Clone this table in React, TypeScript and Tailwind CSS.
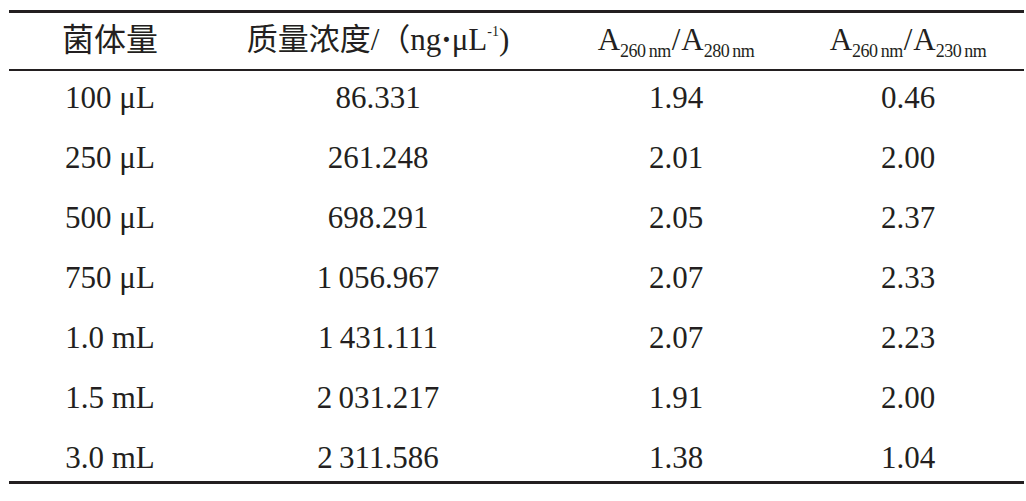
const rows = [
  ['100 μL', '86.331', '1.94', '0.46'],
  ['250 μL', '261.248', '2.01', '2.00'],
  ['500 μL', '698.291', '2.05', '2.37'],
  ['750 μL', '1\u2009056.967', '2.07', '2.33'],
  ['1.0 mL', '1\u2009431.111', '2.07', '2.23'],
  ['1.5 mL', '2\u2009031.217', '1.91', '2.00'],
  ['3.0 mL', '2\u2009311.586', '1.38', '1.04'],
]

function Ratio({ a, b }: { a: string; b: string }) {
  return (
    <span className="whitespace-nowrap">
      A<sub className="text-[18px] tracking-[-0.5px] align-[-2px]">{a}&#8201;nm</sub>
      <span className="mx-[1px]">/</span>
      A<sub className="text-[18px] tracking-[-0.5px] align-[-2px]">{b}&#8201;nm</sub>
    </span>
  )
}

export default function App() {
  return (
    <div className="w-[1026px] h-[501px] bg-white pt-[10px] pl-[9px] pr-[2px] text-[#231f20] font-['Liberation_Serif','Noto_Sans_CJK_SC',serif]">
      <div className="border-t-[3px] border-b-[3px] border-[#231f20]">
        {/* Header */}
        <div className="grid grid-cols-[202px_334px_262px_217px] h-[58px] items-center pb-[3px] border-b-2 border-[#231f20] text-center text-[31px] leading-none">
          <div className="text-[32px]">菌体量</div>
          <div className="whitespace-nowrap">
            质量浓度/（ng<span className="font-bold">·</span>μL<sup className="text-[14px] align-[7px]">-1</sup>)
          </div>
          <div><Ratio a="260" b="280" /></div>
          <div className="pr-[15px]"><Ratio a="260" b="230" /></div>
        </div>

        {/* Body */}
        <div className="pt-[2px] flex flex-col gap-[12px]">
          {rows.map((r) => (
            <div key={r[0]} className="grid grid-cols-[202px_334px_262px_217px] h-[48px] items-center text-center text-[31px] leading-none">
              <div>{r[0]}</div>
              <div>{r[1]}</div>
              <div>{r[2]}</div>
              <div className="pr-[15px]">{r[3]}</div>
            </div>
          ))}
        </div>
      </div>
    </div>
  )
}
